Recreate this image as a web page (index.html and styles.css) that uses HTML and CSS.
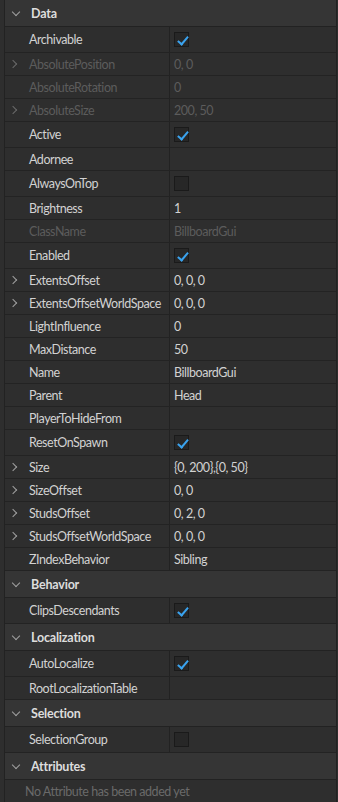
FILE: index.html
```html
<!DOCTYPE html>
<html lang="en">
<head>
  <meta charset="UTF-8" />
  <meta name="viewport" content="width=device-width, initial-scale=1.0"/>
  <title>Properties - BillboardGui</title>
  <link rel="stylesheet" href="styles.css">
</head>
<body>
  <div class="panel">
    <div class="section">
      <span class="chev down"></span><span class="title">Data</span>
    </div>
    <div class="row cb"><div class="name">Archivable</div><div class="val"><span class="box on"></span></div></div>
    <div class="row off"><div class="name"><span class="chev"></span>AbsolutePosition</div><div class="val">0, 0</div></div>
    <div class="row off"><div class="name">AbsoluteRotation</div><div class="val">0</div></div>
    <div class="row off"><div class="name"><span class="chev"></span>AbsoluteSize</div><div class="val">200, 50</div></div>
    <div class="row cb"><div class="name">Active</div><div class="val"><span class="box on"></span></div></div>
    <div class="row"><div class="name">Adornee</div><div class="val"></div></div>
    <div class="row cb"><div class="name">AlwaysOnTop</div><div class="val"><span class="box"></span></div></div>
    <div class="row"><div class="name">Brightness</div><div class="val">1</div></div>
    <div class="row off"><div class="name">ClassName</div><div class="val">BillboardGui</div></div>
    <div class="row cb"><div class="name">Enabled</div><div class="val"><span class="box on"></span></div></div>
    <div class="row"><div class="name"><span class="chev"></span>ExtentsOffset</div><div class="val">0, 0, 0</div></div>
    <div class="row"><div class="name"><span class="chev"></span>ExtentsOffsetWorldSpace</div><div class="val">0, 0, 0</div></div>
    <div class="row"><div class="name">LightInfluence</div><div class="val">0</div></div>
    <div class="row"><div class="name">MaxDistance</div><div class="val">50</div></div>
    <div class="row"><div class="name">Name</div><div class="val">BillboardGui</div></div>
    <div class="row"><div class="name">Parent</div><div class="val">Head</div></div>
    <div class="row"><div class="name">PlayerToHideFrom</div><div class="val"></div></div>
    <div class="row cb"><div class="name">ResetOnSpawn</div><div class="val"><span class="box on"></span></div></div>
    <div class="row"><div class="name"><span class="chev"></span>Size</div><div class="val">{0, 200},{0, 50}</div></div>
    <div class="row"><div class="name"><span class="chev"></span>SizeOffset</div><div class="val">0, 0</div></div>
    <div class="row"><div class="name"><span class="chev"></span>StudsOffset</div><div class="val">0, 2, 0</div></div>
    <div class="row"><div class="name"><span class="chev"></span>StudsOffsetWorldSpace</div><div class="val">0, 0, 0</div></div>
    <div class="row"><div class="name">ZIndexBehavior</div><div class="val">Sibling</div></div>

    <div class="section">
      <span class="chev down"></span><span class="title">Behavior</span>
    </div>
    <div class="row cb"><div class="name">ClipsDescendants</div><div class="val"><span class="box on"></span></div></div>

    <div class="section">
      <span class="chev down"></span><span class="title">Localization</span>
    </div>
    <div class="row cb"><div class="name">AutoLocalize</div><div class="val"><span class="box on"></span></div></div>
    <div class="row"><div class="name">RootLocalizationTable</div><div class="val"></div></div>

    <div class="section">
      <span class="chev down"></span><span class="title">Selection</span>
    </div>
    <div class="row cb"><div class="name">SelectionGroup</div><div class="val"><span class="box"></span></div></div>

    <div class="section">
      <span class="chev down"></span><span class="title">Attributes</span>
    </div>
    <div class="empty">No Attribute has been added yet</div>
  </div>
</body>
</html>
```
FILE: styles.css
```css
body {
  margin: 0;
  background: #2e2e2e;
  font-family: Lato, "Open Sans", sans-serif;
  font-size: 12.5px;
  letter-spacing: -0.45px;
  color: #d2d2d2;
}
.panel {
  width: 333px;
  height: 802px;
  border-left: 4px solid #2e2e2e;
  overflow: hidden;
}
.section {
  display: flex;
  align-items: center;
  height: 26px;
  background: #353535;
  border-bottom: 1px solid #222222;
  border-left: 1px solid #222222;
  border-right: 1px solid #222222;
}
.section .title {
  font-weight: bold;
  color: #dddddd;
  letter-spacing: -0.2px;
}
.row {
  display: flex;
  height: 22px;
  border-bottom: 1px solid #232323;
  border-left: 1px solid #222222;
  border-right: 1px solid #222222;
}
.row.cb {
  height: 25px;
}
.name {
  position: relative;
  width: 140px;
  padding-left: 24px;
  display: flex;
  align-items: center;
  border-right: 1px solid #222222;
  white-space: nowrap;
}
.val {
  flex: 1;
  display: flex;
  align-items: center;
  padding-left: 4px;
}
.row.off .name,
.row.off .val {
  color: #5c5c5c;
}
.chev {
  display: inline-block;
  width: 5px;
  height: 5px;
  border-right: 1.5px solid #a0a0a0;
  border-bottom: 1.5px solid #a0a0a0;
  transform: rotate(-45deg);
}
.name .chev {
  position: absolute;
  left: 5px;
  top: 8px;
}
.row.cb .name .chev {
  top: 9px;
}
.section .chev {
  margin: -3px 12px 0 8px;
  transform: rotate(45deg);
}
.row.off .chev {
  border-color: #6a6a6a;
}
.box {
  display: inline-block;
  position: relative;
  width: 13px;
  height: 13px;
  background: #272727;
  border: 1px solid #1a1a1a;
}
.box.on::after {
  content: "";
  position: absolute;
  left: 5px;
  top: 1px;
  width: 4px;
  height: 9px;
  border-right: 2px solid #3aa3ef;
  border-bottom: 2px solid #3aa3ef;
  transform: rotate(40deg);
}
.empty {
  height: 22px;
  display: flex;
  align-items: center;
  padding-left: 20px;
  color: #6a6a6a;
  border-left: 1px solid #222222;
  border-right: 1px solid #222222;
}
```
